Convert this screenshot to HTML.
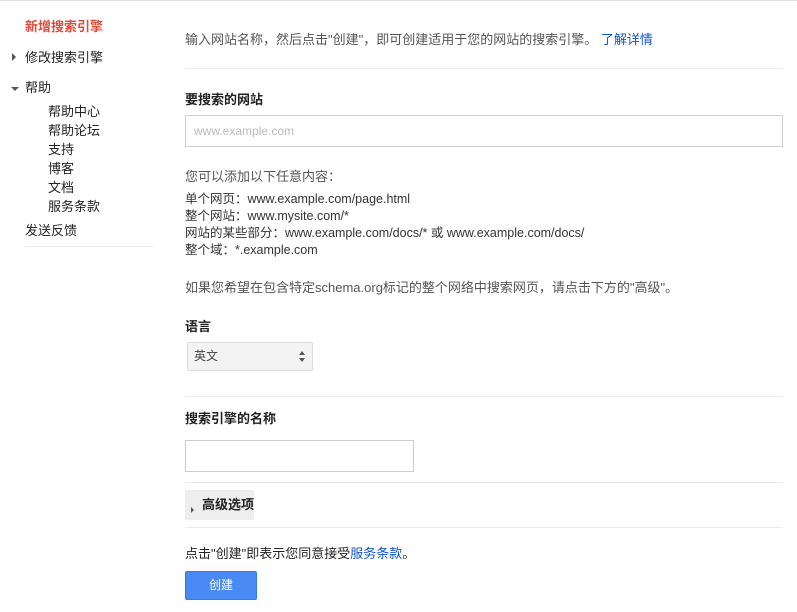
<!DOCTYPE html>
<html><head><meta charset="utf-8"><style>
body{margin:0;width:797px;height:612px;background:#fff;font-family:"Liberation Sans","Noto Sans CJK SC",sans-serif;font-size:13px;color:#222;position:relative;overflow:hidden;border-top:1px solid #e5e5e5;box-sizing:border-box;line-height:15px}
.a{position:absolute;white-space:nowrap}
.hr{position:absolute;height:1px;background:#ebebeb}
.b{font-weight:bold}
.g{color:#555}
a{color:#15c;text-decoration:none}
</style></head><body>
<div class="a" style="left:25px;top:18px;color:#dd4b39;font-weight:bold;font-size:13px">新增搜索引擎</div>
<div class="a" style="left:12px;top:52px;width:0;height:0;border-left:4px solid #555;border-top:4px solid transparent;border-bottom:4px solid transparent"></div>
<div class="a" style="left:25px;top:49px">修改搜索引擎</div>
<div class="a" style="left:11px;top:86px;width:0;height:0;border-top:4px solid #555;border-left:4px solid transparent;border-right:4px solid transparent"></div>
<div class="a" style="left:25px;top:79px">帮助</div>
<div class="a" style="left:48px;top:101px;line-height:19px">帮助中心<br>帮助论坛<br>支持<br>博客<br>文档<br>服务条款</div>
<div class="a" style="left:25px;top:222px">发送反馈</div>
<div class="hr" style="left:25px;top:245px;width:128px"></div>

<div class="a g" style="left:185px;top:31px">输入网站名称，然后点击"创建"，即可创建适用于您的网站的搜索引擎。 <a>了解详情</a></div>
<div class="hr" style="left:185px;top:67px;width:598px"></div>
<div class="a b" style="left:185px;top:91px">要搜索的网站</div>
<div class="a" style="left:185px;top:114px;width:596px;height:30px;border:1px solid #d0d0d0;"></div>
<div class="a" style="left:194px;top:123px;color:#bbb;font-size:12px">www.example.com</div>
<div class="a g" style="left:185px;top:168px">您可以添加以下任意内容：</div>
<div class="a" style="left:185px;top:190px;line-height:17px;font-size:12.5px;color:#333">单个网页：www.example.com/page.html<br>整个网站：www.mysite.com/*<br>网站的某些部分：www.example.com/docs/* 或 www.example.com/docs/<br>整个域：*.example.com</div>
<div class="a g" style="left:185px;top:279px">如果您希望在包含特定schema.org标记的整个网络中搜索网页，请点击下方的"高级"。</div>
<div class="a b" style="left:185px;top:318px">语言</div>
<div class="a" style="left:187px;top:341px;width:124px;height:27px;border:1px solid #ddd;border-radius:2px;background:#f3f3f3"></div>
<div class="a" style="left:194px;top:348px;font-size:12px;color:#444">英文</div>
<div class="a" style="left:299px;top:350px;width:0;height:0;border-bottom:4px solid #555;border-left:3.5px solid transparent;border-right:3.5px solid transparent"></div>
<div class="a" style="left:299px;top:357px;width:0;height:0;border-top:4px solid #555;border-left:3.5px solid transparent;border-right:3.5px solid transparent"></div>
<div class="hr" style="left:185px;top:395px;width:598px"></div>
<div class="a b" style="left:185px;top:410px">搜索引擎的名称</div>
<div class="a" style="left:185px;top:439px;width:227px;height:30px;border:1px solid #ccc"></div>
<div class="hr" style="left:185px;top:481px;width:598px"></div>
<div class="a" style="left:185px;top:489px;width:69px;height:30px;background:#eee"></div>
<div class="a" style="left:191px;top:506px;width:0;height:0;border-left:3px solid #555;border-top:3px solid transparent;border-bottom:3px solid transparent"></div>
<div class="a b" style="left:202px;top:496px">高级选项</div>
<div class="hr" style="left:185px;top:526px;width:598px"></div>
<div class="a" style="left:185px;top:545px">点击"创建"即表示您同意接受<a>服务条款</a>。</div>
<div class="a" style="left:185px;top:570px;width:70px;height:27px;background:#4a8af4;border:1px solid #3079ed;border-radius:2px;color:#fff;font-size:12px;text-align:center;line-height:27px">创建</div>
</body></html>
